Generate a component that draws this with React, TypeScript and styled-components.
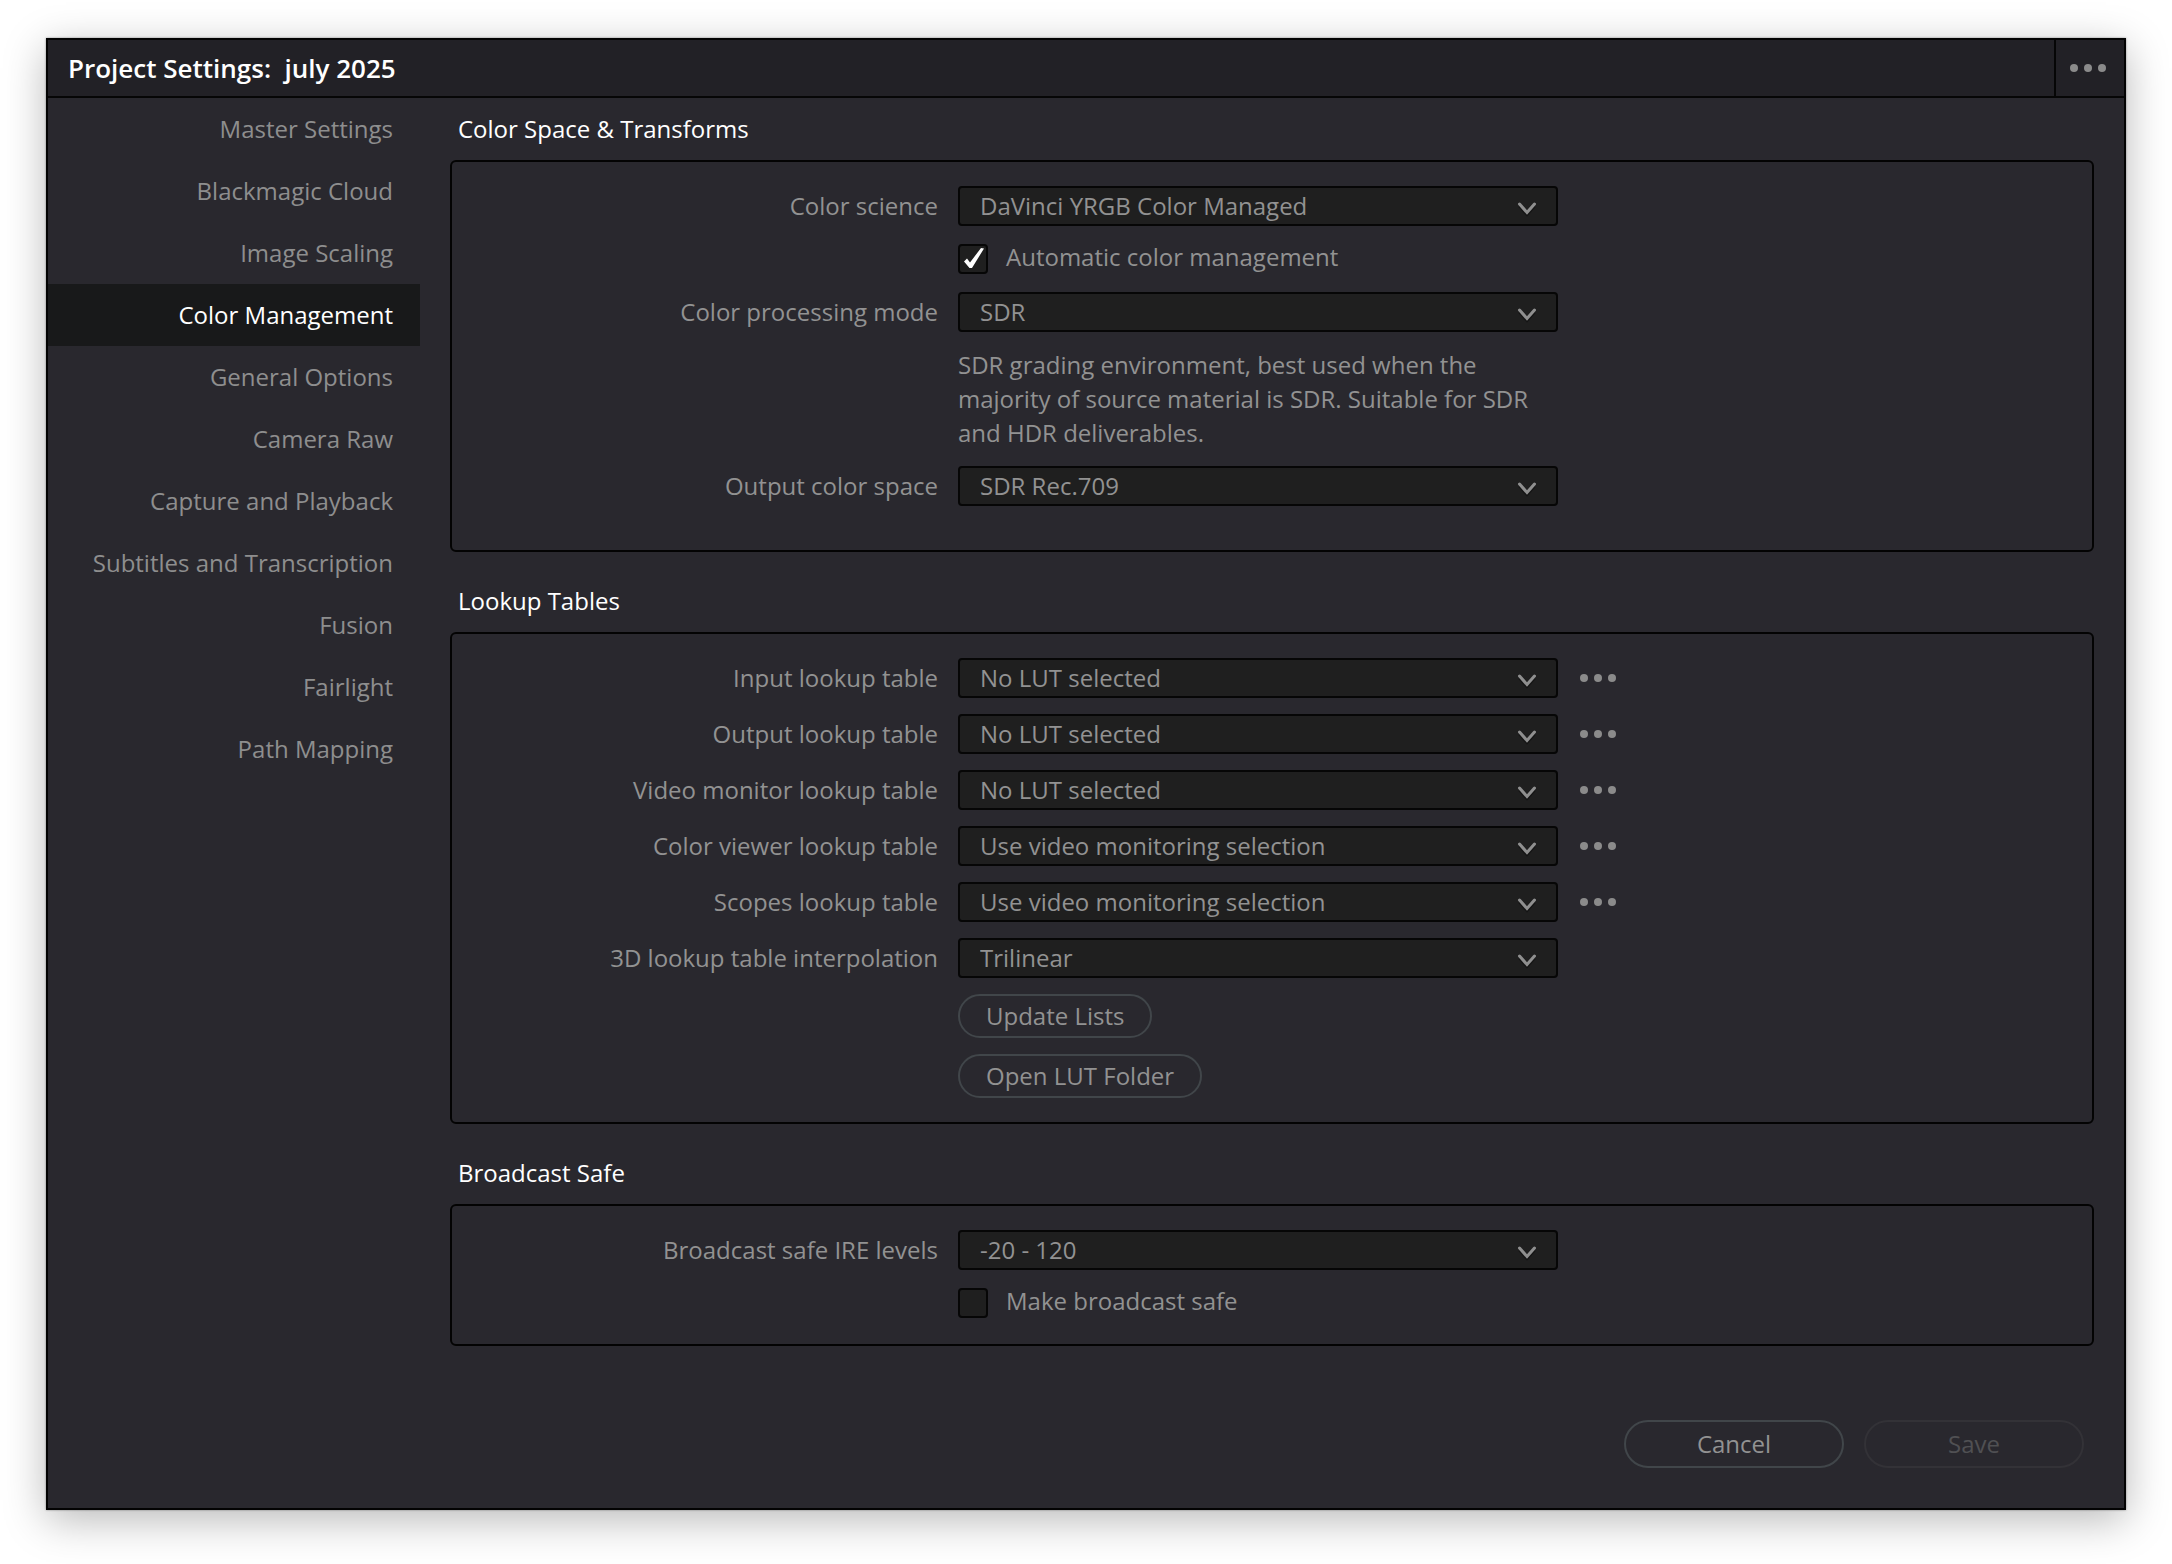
import React, { useId, useState } from "react";
import styled, { createGlobalStyle } from "styled-components";

const GlobalStyle = createGlobalStyle`
  *, *::before, *::after { box-sizing: border-box; }
  body {
    margin: 0;
    background: #fff;
    color: #929292;
    font: 24px/34px "Open Sans", "Noto Sans", sans-serif;
  }
  button, select, input { font: inherit; color: inherit; margin: 0; }
  button { cursor: pointer; }
  button:disabled { cursor: default; }
`;

const Page = styled.div`
  padding: 38px 46px 54px;
`;

const Dialog = styled.main`
  border: 2px solid #030303;
  background: #29282e;
  box-shadow: 0 0 2px rgba(0, 0, 0, 0.4), 0 10px 40px rgba(0, 0, 0, 0.28);
`;

const TitleBar = styled.header`
  display: flex;
  height: 58px;
  border-bottom: 2px solid #060606;
  background: #222126;
`;

const Title = styled.h1`
  flex: 1;
  margin: 0;
  padding-left: 20px;
  color: #fff;
  font-size: 26px;
  line-height: 56px;
  font-weight: 600;
  white-space: pre;
`;

const TitleMenu = styled.button`
  display: flex;
  align-items: center;
  width: 70px;
  padding: 0 0 0 14px;
  border: 0;
  border-left: 2px solid #060606;
  background: none;
`;

const Body = styled.div`
  display: flex;
`;

const Nav = styled.nav`
  flex: 0 0 372px;
  display: flex;
  flex-direction: column;
`;

const NavLink = styled.a<{ $active: boolean }>`
  padding-right: 27px;
  line-height: 62px;
  text-align: right;
  text-decoration: none;
  color: ${(p) => (p.$active ? "#fff" : "#8e8e8e")};
  background: ${(p) => (p.$active ? "#18191a" : "transparent")};
`;

const Content = styled.div`
  flex: 1;
  min-width: 0;
  padding: 0 30px;
`;

const Section = styled.section`
  & + & { margin-top: 18px; }
`;

const SectionTitle = styled.h2`
  margin: 0;
  padding-left: 8px;
  color: #fff;
  font-size: 24px;
  font-weight: 400;
  line-height: 62px;
`;

const Panel = styled.div<{ $tall?: boolean }>`
  display: flex;
  flex-direction: column;
  gap: 16px;
  padding: 24px 0 ${(p) => (p.$tall ? 44 : 24)}px;
  border: 2px solid #030303;
  border-radius: 6px;
`;

const Row = styled.div`
  display: grid;
  grid-template-columns: 486px 600px 1fr;
  column-gap: 20px;
  align-items: center;

  & > :only-child { grid-column: 2; }
`;

const FieldLabel = styled.label`
  text-align: right;
`;

const SelectBox = styled.div`
  position: relative;
  display: flex;
`;

const Select = styled.select`
  appearance: none;
  width: 100%;
  height: 40px;
  padding: 0 48px 0 20px;
  border: 2px solid #060606;
  border-radius: 4px;
  background: #1f1f1f;
`;

const Chevron = styled.svg`
  position: absolute;
  right: 20px;
  top: 14px;
  pointer-events: none;
`;

const MoreButton = styled.button`
  display: flex;
  justify-self: start;
  padding: 8px 2px;
  border: 0;
  background: none;
`;

const CheckLabel = styled.label`
  display: flex;
  align-items: flex-start;
  gap: 18px;
  padding: 2px 0;
  line-height: 26px;
`;

const CheckSlot = styled.span`
  position: relative;
  display: flex;
`;

const CheckInput = styled.input`
  appearance: none;
  width: 30px;
  height: 30px;
  border: 2px solid #060606;
  border-radius: 4px;
  background: #1f1f1f;

  & + svg { display: none; }
  &:checked + svg { display: block; }
`;

const CheckMark = styled.svg`
  position: absolute;
  inset: 0;
  pointer-events: none;
`;

const Hint = styled.p`
  margin: 0;
`;

const PillButton = styled.button`
  justify-self: start;
  height: 44px;
  padding: 0 26px;
  border: 2px solid #41464a;
  border-radius: 24px;
  background: none;
  line-height: 40px;
`;

const FooterButton = styled(PillButton)`
  width: 220px;
  height: 48px;
  line-height: 44px;

  &:disabled {
    border-color: #333237;
    color: #505053;
  }
`;

const Footer = styled.footer`
  display: flex;
  justify-content: flex-end;
  gap: 20px;
  padding: 74px 40px 40px;
`;

function Dots() {
  return (
    <svg width="36" height="8" viewBox="0 0 36 8" fill="#8b8b8b" aria-hidden="true">
      <circle cx="4" cy="4" r="4" />
      <circle cx="18" cy="4" r="4" />
      <circle cx="32" cy="4" r="4" />
    </svg>
  );
}

function SelectField({ label, value, more }: { label: string; value: string; more?: boolean }) {
  const id = useId();
  return (
    <Row>
      <FieldLabel htmlFor={id}>{label}</FieldLabel>
      <SelectBox>
        <Select id={id} defaultValue={value}>
          <option>{value}</option>
        </Select>
        <Chevron width="22" height="18" viewBox="0 0 22 18" fill="none" aria-hidden="true">
          <path d="M3.5 6 11 14.5 18.5 6" stroke="#151515" strokeWidth="3" />
          <path d="M3.5 4 11 12.5 18.5 4" stroke="#8f8f8f" strokeWidth="3" strokeLinecap="round" />
        </Chevron>
      </SelectBox>
      {more && (
        <MoreButton type="button" aria-label={`${label} options`}>
          <Dots />
        </MoreButton>
      )}
    </Row>
  );
}

function CheckField({ label, checked = false }: { label: string; checked?: boolean }) {
  return (
    <Row>
      <CheckLabel>
        <CheckSlot>
          <CheckInput type="checkbox" defaultChecked={checked} />
          <CheckMark width="30" height="30" viewBox="0 0 30 30" aria-hidden="true">
            <path d="M6 17.5 9 14.5 12 18.5 23 4 26 4.5 14 24 11.5 24Z" fill="#fff" />
          </CheckMark>
        </CheckSlot>
        {label}
      </CheckLabel>
    </Row>
  );
}

const pages = [
  "Master Settings",
  "Blackmagic Cloud",
  "Image Scaling",
  "Color Management",
  "General Options",
  "Camera Raw",
  "Capture and Playback",
  "Subtitles and Transcription",
  "Fusion",
  "Fairlight",
  "Path Mapping",
];

const lookupTables = [
  ["Input lookup table", "No LUT selected"],
  ["Output lookup table", "No LUT selected"],
  ["Video monitor lookup table", "No LUT selected"],
  ["Color viewer lookup table", "Use video monitoring selection"],
  ["Scopes lookup table", "Use video monitoring selection"],
];

export default function App() {
  const [page, setPage] = useState("Color Management");
  return (
    <Page>
      <GlobalStyle />
      <Dialog>
        <TitleBar>
          <Title>{"Project Settings:  july 2025"}</Title>
          <TitleMenu type="button" aria-label="Project settings options">
            <Dots />
          </TitleMenu>
        </TitleBar>
        <Body>
          <Nav>
            {pages.map((name) => (
              <NavLink
                key={name}
                href="#"
                $active={name === page}
                aria-current={name === page ? "page" : undefined}
                onClick={() => setPage(name)}
              >
                {name}
              </NavLink>
            ))}
          </Nav>
          <Content>
            <Section>
              <SectionTitle>Color Space &amp; Transforms</SectionTitle>
              <Panel $tall>
                <SelectField label="Color science" value="DaVinci YRGB Color Managed" />
                <CheckField label="Automatic color management" checked />
                <SelectField label="Color processing mode" value="SDR" />
                <Row>
                  <Hint>
                    SDR grading environment, best used when the majority of source material is SDR.
                    Suitable for SDR and HDR deliverables.
                  </Hint>
                </Row>
                <SelectField label="Output color space" value="SDR Rec.709" />
              </Panel>
            </Section>
            <Section>
              <SectionTitle>Lookup Tables</SectionTitle>
              <Panel>
                {lookupTables.map(([label, value]) => (
                  <SelectField key={label} label={label} value={value} more />
                ))}
                <SelectField label="3D lookup table interpolation" value="Trilinear" />
                <Row>
                  <PillButton type="button">Update Lists</PillButton>
                </Row>
                <Row>
                  <PillButton type="button">Open LUT Folder</PillButton>
                </Row>
              </Panel>
            </Section>
            <Section>
              <SectionTitle>Broadcast Safe</SectionTitle>
              <Panel>
                <SelectField label="Broadcast safe IRE levels" value="-20 - 120" />
                <CheckField label="Make broadcast safe" />
              </Panel>
            </Section>
          </Content>
        </Body>
        <Footer>
          <FooterButton type="button">Cancel</FooterButton>
          <FooterButton type="button" disabled>
            Save
          </FooterButton>
        </Footer>
      </Dialog>
    </Page>
  );
}
